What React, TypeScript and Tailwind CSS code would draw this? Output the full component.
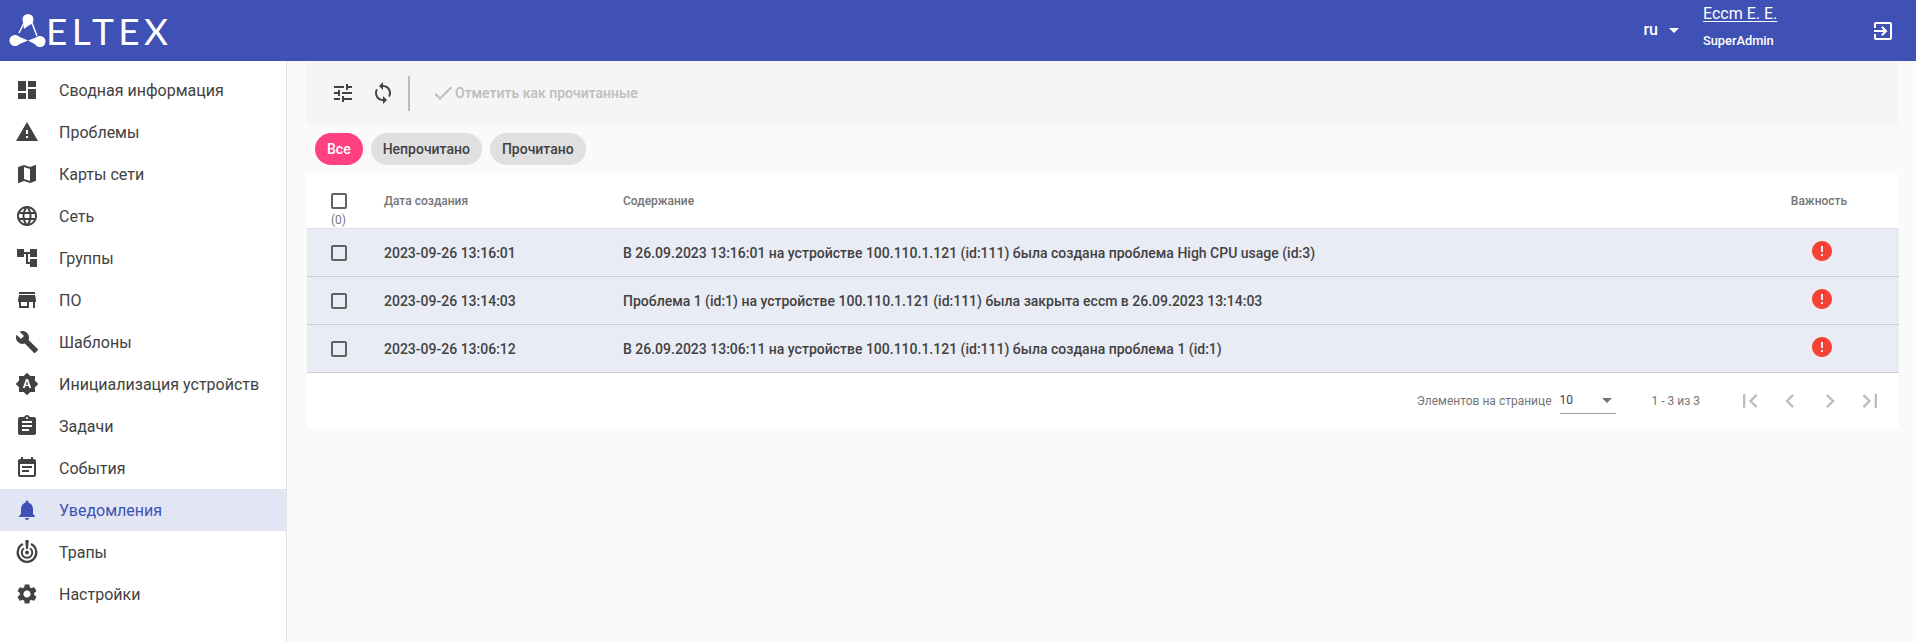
import React from "react";

const icons = {
  dashboard: "M3 13h8V3H3v10zm0 8h8v-6H3v6zm10 0h8V11h-8v10zm0-18v6h8V3h-8z",
  warning: "M1 21h22L12 2 1 21zm12-3h-2v-2h2v2zm0-4h-2v-4h2v4z",
  map: "M20.5 3l-.16.03L15 5.1 9 3 3.36 4.9c-.21.07-.36.25-.36.48V20.5c0 .28.22.5.5.5l.16-.03L9 18.9l6 2.1 5.64-1.9c.21-.07.36-.25.36-.48V3.5c0-.28-.22-.5-.5-.5zM15 19l-6-2.11V5l6 2.11V19z",
  language:
    "M11.99 2C6.47 2 2 6.48 2 12s4.47 10 9.99 10C17.52 22 22 17.52 22 12S17.52 2 11.99 2zm6.93 6h-2.95c-.32-1.25-.78-2.45-1.38-3.56 1.84.63 3.37 1.91 4.33 3.56zM12 4.04c.83 1.2 1.48 2.53 1.91 3.96h-3.82c.43-1.43 1.08-2.76 1.91-3.96zM4.26 14C4.1 13.36 4 12.69 4 12s.1-1.36.26-2h3.38c-.08.66-.14 1.32-.14 2 0 .68.06 1.34.14 2H4.26zm.82 2h2.95c.32 1.25.78 2.45 1.38 3.56-1.84-.63-3.37-1.9-4.33-3.56zm2.95-8H5.08c.96-1.66 2.49-2.93 4.33-3.56C8.81 5.55 8.35 6.75 8.03 8zM12 19.96c-.83-1.2-1.48-2.53-1.91-3.96h3.82c-.43 1.43-1.08 2.76-1.91 3.96zM14.34 14H9.66c-.09-.66-.16-1.32-.16-2 0-.68.07-1.35.16-2h4.68c.09.65.16 1.32.16 2 0 .68-.07 1.34-.16 2zm.25 5.56c.6-1.11 1.06-2.31 1.38-3.56h2.95c-.96 1.65-2.49 2.93-4.33 3.56zM16.36 14c.08-.66.14-1.32.14-2 0-.68-.06-1.34-.14-2h3.38c.16.64.26 1.31.26 2s-.1 1.36-.26 2h-3.38z",
  tree: "M22 11V3h-7v3H9V3H2v8h7V8h2v10h4v3h7v-8h-7v3h-2V8h2v3z",
  store: "M20 4H4v2h16V4zm1 10v-2l-1-5H4l-1 5v2h1v6h10v-6h4v6h2v-6h1zm-9 4H6v-4h6v4z",
  build:
    "M22.7 19l-9.1-9.1c.9-2.3.4-5-1.5-6.9-2-2-5-2.4-7.4-1.3L9 6 6 9 1.6 4.7C.4 7.1.9 10.1 2.9 12.1c1.9 1.9 4.6 2.4 6.9 1.5l9.1 9.1c.4.4 1 .4 1.4 0l2.3-2.3c.5-.4.5-1.1.1-1.4z",
  auto: "M10.85 12.65h2.3L12 9l-1.15 3.65zM20 8.69V4h-4.69L12 .69 8.69 4H4v4.69L.69 12 4 15.31V20h4.69L12 23.31 15.31 20H20v-4.69L23.31 12 20 8.69zM14.3 16l-.7-2h-3.2l-.7 2H7.8L11 7h2l3.2 9h-1.9z",
  assignment:
    "M19 3h-4.18C14.4 1.84 13.3 1 12 1c-1.3 0-2.4.84-2.82 2H5c-1.1 0-2 .9-2 2v14c0 1.1.9 2 2 2h14c1.1 0 2-.9 2-2V5c0-1.1-.9-2-2-2zm-7 0c.55 0 1 .45 1 1s-.45 1-1 1-1-.45-1-1 .45-1 1-1zm2 14H7v-2h7v2zm3-4H7v-2h10v2zm0-4H7V7h10v2z",
  event:
    "M17 10H7v2h10v-2zm2-7h-1V1h-2v2H8V1H6v2H5c-1.11 0-1.99.9-1.99 2L3 19c0 1.1.89 2 2 2h14c1.1 0 2-.9 2-2V5c0-1.1-.9-2-2-2zm0 16H5V8h14v11zm-5-5H7v2h7v-2z",
  bell: "M12 22c1.1 0 2-.9 2-2h-4c0 1.1.89 2 2 2zm6-6v-5c0-3.07-1.64-5.64-4.5-6.32V4c0-.83-.67-1.5-1.5-1.5s-1.5.67-1.5 1.5v.68C7.63 5.36 6 7.92 6 11v5l-2 2v1h16v-1l-2-2z",
  settings:
    "M19.14 12.94c.04-.3.06-.61.06-.94 0-.32-.02-.64-.07-.94l2.03-1.58c.18-.14.23-.41.12-.61l-1.92-3.32c-.12-.22-.37-.29-.59-.22l-2.39.96c-.5-.38-1.03-.7-1.62-.94l-.36-2.54c-.04-.24-.24-.41-.48-.41h-3.84c-.24 0-.43.17-.47.41l-.36 2.54c-.59.24-1.13.57-1.62.94l-2.39-.96c-.22-.08-.47 0-.59.22L2.74 8.87c-.12.21-.08.47.12.61l2.03 1.58c-.05.3-.09.63-.09.94s.02.64.07.94l-2.03 1.58c-.18.14-.23.41-.12.61l1.92 3.32c.12.22.37.29.59.22l2.39-.96c.5.38 1.03.7 1.62.94l.36 2.54c.05.24.24.41.48.41h3.84c.24 0 .44-.17.47-.41l.36-2.54c.59-.24 1.13-.56 1.62-.94l2.39.96c.22.08.47 0 .59-.22l1.92-3.32c.12-.22.07-.47-.12-.61l-2.01-1.58zM12 15.6c-1.98 0-3.6-1.62-3.6-3.6s1.62-3.6 3.6-3.6 3.6 1.62 3.6 3.6-1.62 3.6-3.6 3.6z",
  tune: "M3 17v2h6v-2H3zM3 5v2h10V5H3zm10 16v-2h8v-2h-8v-2h-2v6h2zM7 9v2H3v2h4v2h2V9H7zm14 4v-2H11v2h10zm-6-4h2V7h4V5h-4V3h-2v6z",
  sync: "M12 4V1L8 5l4 4V6c3.31 0 6 2.69 6 6 0 1.01-.25 1.97-.7 2.8l1.46 1.46C19.54 15.03 20 13.57 20 12c0-4.42-3.58-8-8-8zm0 14c-3.31 0-6-2.69-6-6 0-1.01.25-1.97.7-2.8L5.24 7.74C4.46 8.97 4 10.43 4 12c0 4.42 3.58 8 8 8v3l4-4-4-4v3z",
  check: "M9 16.17L4.83 12l-1.42 1.41L9 19 21 7l-1.41-1.41z",
  error: "M12 2C6.48 2 2 6.48 2 12s4.48 10 10 10 10-4.48 10-10S17.52 2 12 2zm1 15h-2v-2h2v2zm0-4h-2V7h2v6z",
  exit: "M10.09 15.59L11.5 17l5-5-5-5-1.41 1.41L12.67 11H3v2h9.67l-2.58 2.59zM19 3H5c-1.11 0-2 .9-2 2v4h2V5h14v14H5v-4H3v4c0 1.1.89 2 2 2h14c1.1 0 2-.9 2-2V5c0-1.1-.9-2-2-2z",
  first: "M18.41 16.59L13.82 12l4.59-4.59L17 6l-6 6 6 6zM6 6h2v12H6z",
  prev: "M15.41 7.41L14 6l-6 6 6 6 1.41-1.41L10.83 12z",
  next: "M10 6L8.59 7.41 13.17 12l-4.58 4.59L10 18l6-6z",
  last: "M5.59 7.41L10.18 12l-4.59 4.59L7 18l6-6-6-6zM16 6h2v12h-2z",
};

type IconName = keyof typeof icons;

function Icon({ name, className }: { name: IconName; className?: string }) {
  return (
    <svg viewBox="0 0 24 24" fill="currentColor" className={className}>
      <path d={icons[name]} />
    </svg>
  );
}

function TrapIcon() {
  return (
    <svg viewBox="0 0 24 24" fill="none" stroke="currentColor" className="w-6 h-6 shrink-0">
      <path d="M8 4.1A9.3 9.3 0 1 0 16 4.1" strokeWidth="2.2" />
      <path d="M9 8.2A5.3 5.3 0 1 0 15 8.2" strokeWidth="2" />
      <path d="M10.3 1.2a1.7 1.7 0 0 1 3.4 0L13 9h-2z" fill="currentColor" stroke="none" />
      <circle cx="12" cy="12.5" r="1.9" fill="currentColor" stroke="none" />
    </svg>
  );
}

const menu: { title: string; icon: IconName | "trap"; active?: boolean }[] = [
  { title: "Сводная информация", icon: "dashboard" },
  { title: "Проблемы", icon: "warning" },
  { title: "Карты сети", icon: "map" },
  { title: "Сеть", icon: "language" },
  { title: "Группы", icon: "tree" },
  { title: "ПО", icon: "store" },
  { title: "Шаблоны", icon: "build" },
  { title: "Инициализация устройств", icon: "auto" },
  { title: "Задачи", icon: "assignment" },
  { title: "События", icon: "event" },
  { title: "Уведомления", icon: "bell", active: true },
  { title: "Трапы", icon: "trap" },
  { title: "Настройки", icon: "settings" },
];

const rows = [
  {
    date: "2023-09-26 13:16:01",
    text: "В 26.09.2023 13:16:01 на устройстве 100.110.1.121 (id:111) была создана проблема High CPU usage (id:3)",
  },
  {
    date: "2023-09-26 13:14:03",
    text: "Проблема 1 (id:1) на устройстве 100.110.1.121 (id:111) была закрыта eccm в 26.09.2023 13:14:03",
  },
  {
    date: "2023-09-26 13:06:12",
    text: "В 26.09.2023 13:06:11 на устройстве 100.110.1.121 (id:111) была создана проблема 1 (id:1)",
  },
];

function Logo() {
  return (
    <div className="flex items-center h-full pl-[9px]">
      <svg viewBox="0 0 39 34" className="w-[39px] h-[34px] text-white" fill="currentColor">
        <path d="M15 9 L10 19 M23 9 L28 22" stroke="currentColor" strokeWidth="1.5" />
        <circle cx="19" cy="5.5" r="5.5" />
        <path d="M14 7 L15 15 L23.5 8.5 Z" />
        <circle cx="6" cy="26.5" r="5.5" />
        <path d="M6 21 L19 26.5 L6 32 Z" />
        <circle cx="31" cy="27.5" r="5.5" />
        <path d="M31 22 L19 26.5 L31 33 Z" />
      </svg>
      <span className="ml-[-2px] text-white font-['Lato'] font-normal text-[37px] leading-none tracking-[4.5px]">ELTEX</span>
    </div>
  );
}

export default function App() {
  return (
    <div className="h-[642px] w-[1916px] flex flex-col overflow-hidden bg-[#fafafa] font-['Roboto',sans-serif] text-[#424242]">
      <header className="h-[61px] shrink-0 bg-[#3f51b5] flex items-center text-white">
        <Logo />
        <div className="ml-auto flex items-center h-full">
          <span className="text-base font-medium pb-[2px]">ru</span>
          <span className="ml-[11px] w-0 h-0 border-x-[5px] border-x-transparent border-t-[5px] border-t-white" />
          <div className="ml-[24px] w-[168px] h-full flex flex-col pt-[4px]">
            <span className="text-base leading-[20px] underline underline-offset-2">Eccm E. E.</span>
            <span className="mt-[9px] text-[12.8px] font-medium leading-[16px]">SuperAdmin</span>
          </div>
          <Icon name="exit" className="w-6 h-6 mr-[21px]" />
        </div>
      </header>
      <div className="flex flex-1 min-h-0">
        <aside className="w-[287px] shrink-0 bg-white border-r border-[#e0e0e0] pt-2">
          {menu.map((item) => (
            <div
              key={item.title}
              className={`h-[42px] flex items-center pl-[15px] text-base ${
                item.active ? "bg-[#e2e5f4] text-[#3f51b5]" : "text-[#424242]"
              }`}
            >
              {item.icon === "trap" ? <TrapIcon /> : <Icon name={item.icon} className="w-6 h-6 shrink-0" />}
              <span className="ml-5 pt-[2px]">{item.title}</span>
            </div>
          ))}
        </aside>
        <main className="flex-1 min-w-0 pr-[17px] pl-[20px]">
          <div className="h-16 bg-[#f5f5f5] flex items-center pl-[24px] text-[#424242]">
            <Icon name="tune" className="w-6 h-6" />
            <Icon name="sync" className="w-6 h-6 ml-[16px]" />
            <div className="w-[2px] h-[35px] bg-[#bdbdbd] ml-[13px]" />
            <Icon name="check" className="w-6 h-6 ml-[21px] text-[#bdbdbd]" />
            <span className="text-sm font-medium text-[#bdbdbd]">Отметить как прочитанные</span>
          </div>
          <div className="flex gap-2 pt-2 pl-2 h-[48px]">
            <span className="h-8 px-3 rounded-full bg-[#ff4081] text-white text-sm font-medium flex items-center">Все</span>
            <span className="h-8 px-3 rounded-full bg-[#e0e0e0] text-[#424242] text-sm font-medium flex items-center">Непрочитано</span>
            <span className="h-8 px-3 rounded-full bg-[#e0e0e0] text-[#424242] text-sm font-medium flex items-center">Прочитано</span>
          </div>
          <div className="bg-white">
            <div className="h-[56px] flex border-b border-[#e0e0e0] text-xs font-medium text-[#757575]">
              <div className="w-[77px] pl-6 pt-[20px] flex flex-col">
                <span className="w-4 h-4 border-2 border-[#616161] rounded-[2px]" />
                <span className="text-xs leading-[16px] mt-[3px] font-normal">(0)</span>
              </div>
              <div className="w-[239px] pt-[20px]">Дата создания</div>
              <div className="flex-1 pt-[20px]">Содержание</div>
              <div className="w-[150px] pt-[20px] text-center pr-[10px]">Важность</div>
            </div>
            {rows.map((row) => (
              <div key={row.date} className="h-[48px] flex items-center bg-[#e9ecf5] border-b border-[#c9ccd6] text-sm font-medium text-[#424242]">
                <div className="w-[77px] pl-[24px] flex">
                  <span className="w-4 h-4 border-2 border-[#616161] rounded-[2px]" />
                </div>
                <div className="w-[239px]">{row.date}</div>
                <div className="flex-1">{row.text}</div>
                <div className="w-[150px] flex justify-center pr-[4px] pb-[3px]">
                  <Icon name="error" className="w-6 h-6 text-[#f44336]" />
                </div>
              </div>
            ))}
            <div className="h-[55px] flex items-center text-xs text-[#757575] pr-[15px]">
              <span className="ml-auto">Элементов на странице</span>
              <div className="ml-[8px] w-[56px] h-[26px] border-b border-[#9e9e9e] flex items-center justify-between pr-[4px] text-[#424242]">
                <span>10</span>
                <span className="w-0 h-0 border-x-[5px] border-x-transparent border-t-[5px] border-t-[#757575]" />
              </div>
              <span className="ml-[36px] mr-[36px]">1 - 3 из 3</span>
              <div className="flex gap-[12px] text-[#bdbdbd]">
                <Icon name="first" className="w-7 h-7" />
                <Icon name="prev" className="w-7 h-7" />
                <Icon name="next" className="w-7 h-7" />
                <Icon name="last" className="w-7 h-7" />
              </div>
            </div>
          </div>
        </main>
      </div>
    </div>
  );
}
